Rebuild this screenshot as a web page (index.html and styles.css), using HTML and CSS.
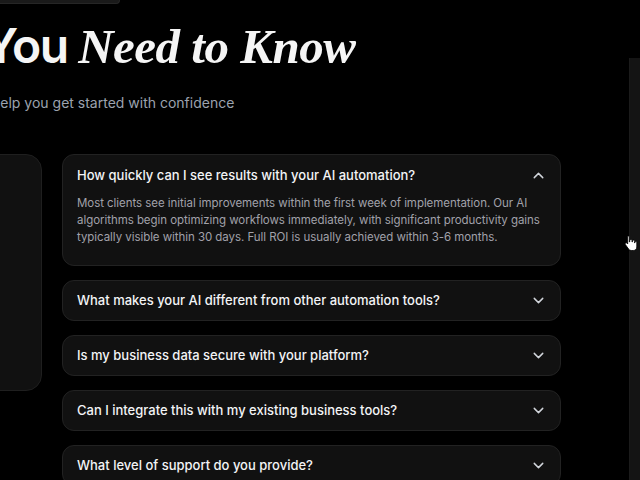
FILE: index.html
```html
<!DOCTYPE html>
<html lang="en">
<head>
<meta charset="utf-8">
<title>FAQ</title>
<link rel="stylesheet" href="styles.css">
</head>
<body>
<div class="page">
  <main class="main">
    <div class="badge-edge"></div>
    <h2 class="title"><span class="sans">You</span> <em class="serif">Need to Know</em></h2>
    <p class="subtitle">help you get started with confidence</p>
    <div class="row">
      <div class="side-card"></div>
      <div class="faq">
        <div class="item open">
          <div class="q"><span>How quickly can I see results with your AI automation?</span>
            <svg class="chev" viewBox="0 0 24 24"><path d="m6 15 6-6 6 6"/></svg></div>
          <p class="a">Most clients see initial improvements within the first week of implementation. Our AI algorithms begin optimizing workflows immediately, with significant productivity gains typically visible within 30 days. Full ROI is usually achieved within 3-6 months.</p>
        </div>
        <div class="item">
          <div class="q"><span>What makes your AI different from other automation tools?</span>
            <svg class="chev" viewBox="0 0 24 24"><path d="m6 9 6 6 6-6"/></svg></div>
        </div>
        <div class="item">
          <div class="q"><span>Is my business data secure with your platform?</span>
            <svg class="chev" viewBox="0 0 24 24"><path d="m6 9 6 6 6-6"/></svg></div>
        </div>
        <div class="item">
          <div class="q"><span>Can I integrate this with my existing business tools?</span>
            <svg class="chev" viewBox="0 0 24 24"><path d="m6 9 6 6 6-6"/></svg></div>
        </div>
        <div class="item">
          <div class="q"><span>What level of support do you provide?</span>
            <svg class="chev" viewBox="0 0 24 24"><path d="m6 9 6 6 6-6"/></svg></div>
        </div>
      </div>
    </div>
  </main>
  <aside class="aside"></aside>
  <svg class="cursor" viewBox="0 0 14 18" width="14" height="18"><path d="M4 1.5c.8 0 1.3.6 1.3 1.3V8l.4-.1V6.6c0-.7.6-1.2 1.2-1.2s1.2.5 1.2 1.2V8h.3V7.2c0-.6.5-1.1 1.1-1.1s1.1.5 1.1 1.1V9h.2v-.5c0-.6.5-1 1-1s1 .4 1 1V13c0 2-1.5 3.5-3.5 3.5H7.2c-1.1 0-2-.5-2.6-1.4L1.4 10.6c-.4-.6-.2-1.3.4-1.6.5-.3 1.1-.1 1.5.4l.4.6V2.8c0-.7.5-1.3 1.3-1.3z" fill="#fff" stroke="#000" stroke-width=".8"/></svg>
</div>
</body>
</html>
```
FILE: styles.css
```css
* { box-sizing: border-box; }
html, body {
  margin: 0;
  padding: 0;
  background: #000;
}
body {
  font-family: Inter, "Noto Sans", Arial, sans-serif;
  color: #f3f4f6;
  overflow: hidden;
}
.page {
  position: relative;
  width: 640px;
  height: 480px;
  display: flex;
  overflow: hidden;
}
.main {
  width: 629px;
  flex: none;
}
.aside {
  flex: 1;
  margin-top: 58px;
  background: #141414;
  border-left: 1px solid #1b1b1b;
}
.badge-edge {
  width: 140px;
  height: 4px;
  margin-left: -20px;
  background: #1a1a1a;
  border: 1px solid #262626;
  border-top: none;
  border-bottom-right-radius: 10px;
}
.title {
  margin: 15px 0 0 -16px;
  font-size: 48px;
  line-height: 53px;
  font-weight: 600;
  letter-spacing: -1.5px;
  white-space: nowrap;
  color: #f5f5f5;
}
.title .serif {
  font-family: "Liberation Serif", "Times New Roman", serif;
  font-style: italic;
  font-weight: 700;
  font-size: 49px;
  letter-spacing: -0.5px;
}
.subtitle {
  margin: 18px 0 0 -8px;
  font-size: 14px;
  line-height: 24px;
  color: #9ca3af;
  white-space: nowrap;
}
.row {
  display: flex;
  gap: 20px;
  margin-top: 39px;
  align-items: flex-start;
}
.side-card {
  flex: none;
  width: 300px;
  height: 237px;
  margin-left: -258px;
  background: #111111;
  border: 1px solid #1f1f1f;
  border-radius: 16px;
}
.faq {
  width: 499px;
  display: flex;
  flex-direction: column;
  gap: 14px;
}
.item {
  background: #111111;
  border: 1px solid #222222;
  border-radius: 12px;
}
.q {
  display: flex;
  align-items: center;
  justify-content: space-between;
  padding: 11px 13px 11px 14px;
  font-size: 13px;
  line-height: 17px;
  font-weight: 500;
  color: #f3f4f6;
}
.item.open .q {
  padding-top: 12px;
}
.chev {
  width: 17px;
  height: 17px;
  flex: none;
  fill: none;
  stroke: #d1d5db;
  stroke-width: 2;
  stroke-linecap: round;
  stroke-linejoin: round;
}
.a {
  margin: 0;
  padding: 0 14px 19px 14px;
  font-size: 11.5px;
  line-height: 17px;
  letter-spacing: -0.05px;
  color: #a1a1aa;
}
.cursor {
  position: absolute;
  left: 624px;
  top: 234px;
}
```
